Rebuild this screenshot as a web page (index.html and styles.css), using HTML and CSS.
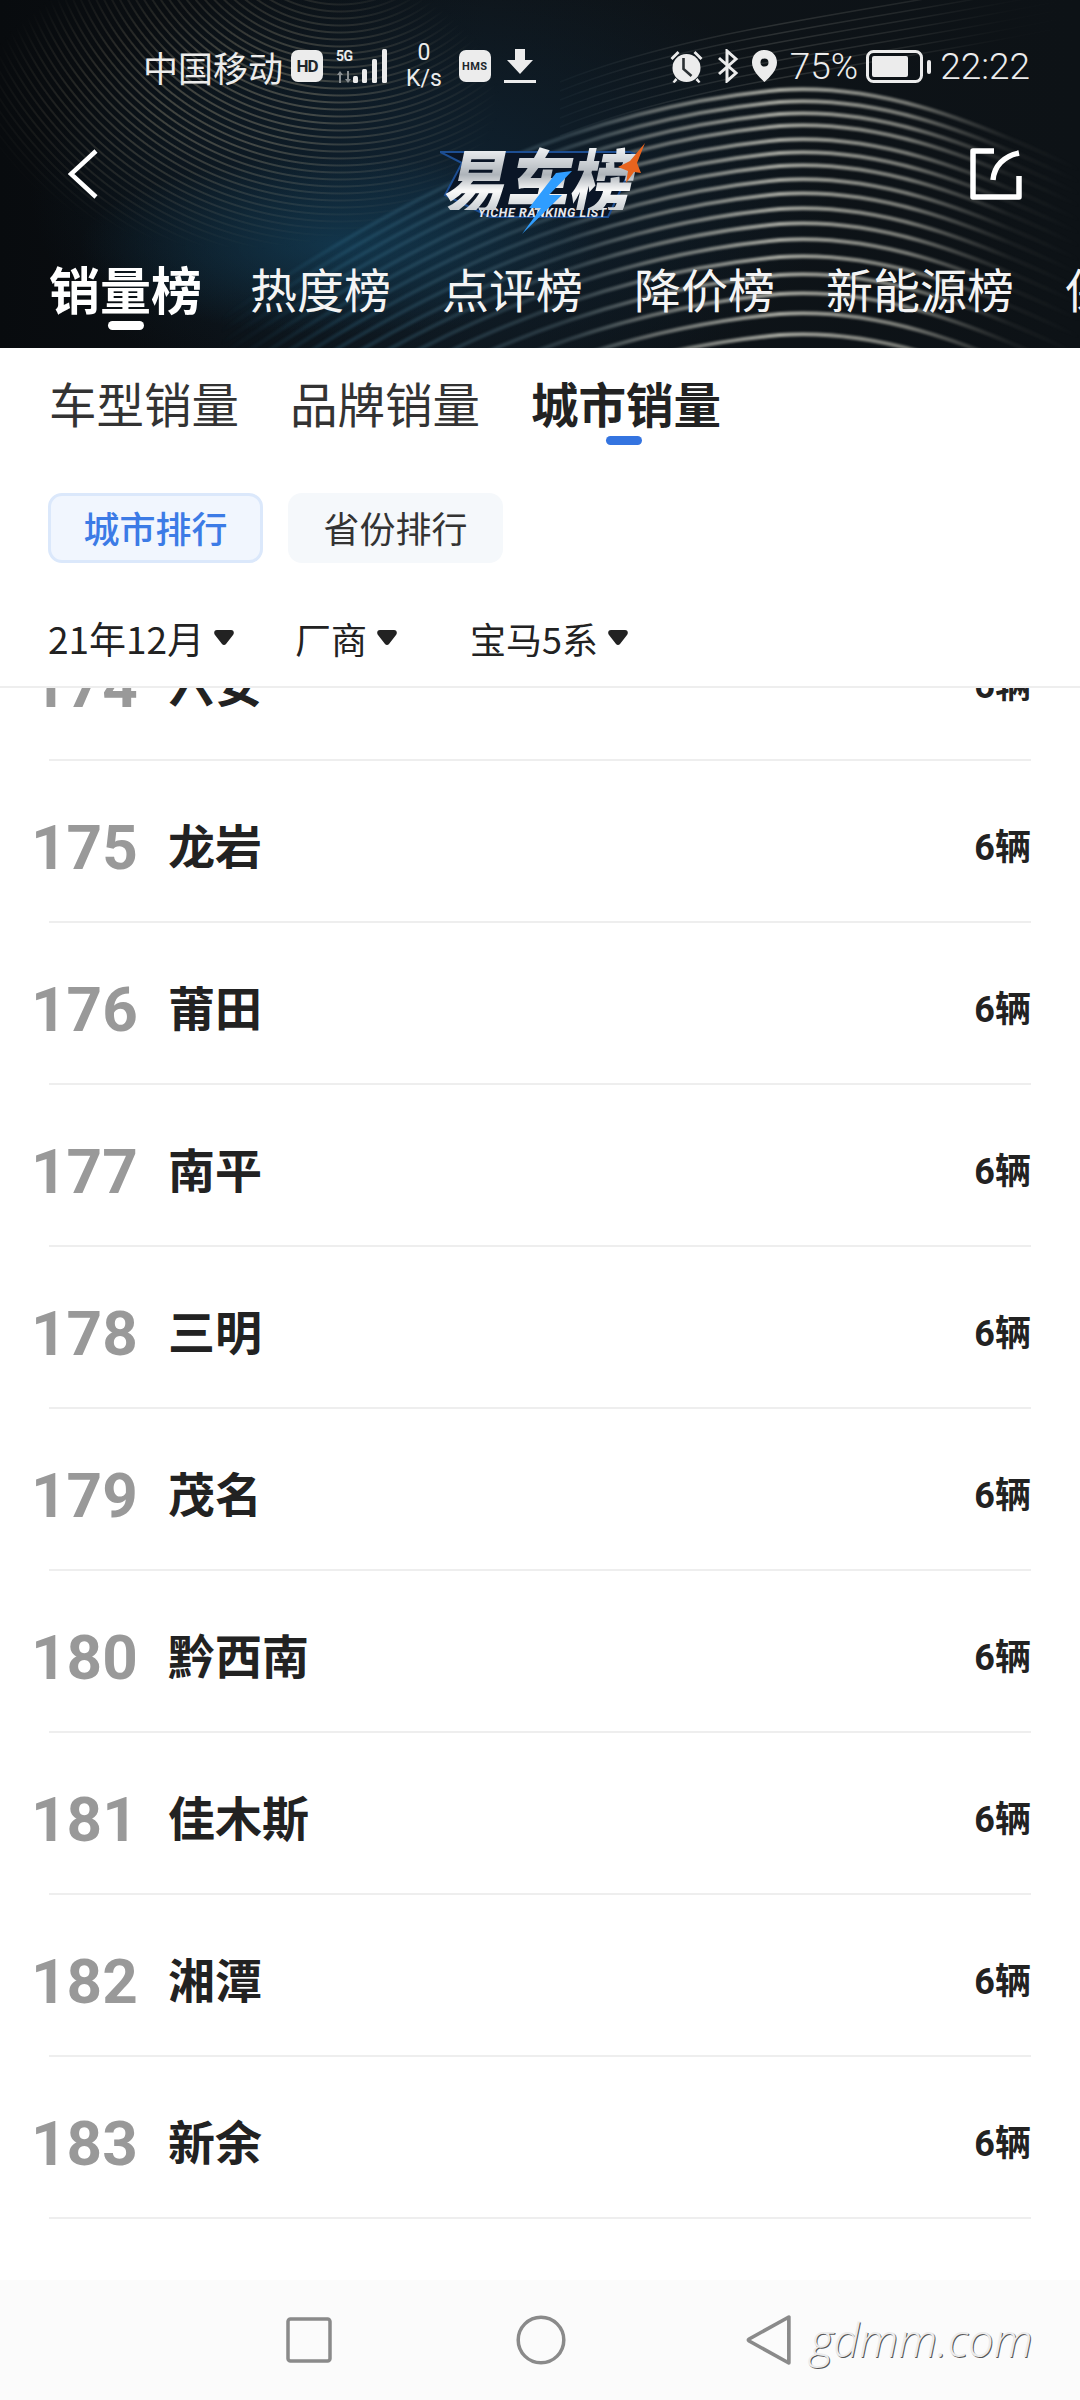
FILE: index.html
```html
<!DOCTYPE html>
<html lang="zh-CN">
<head>
    <meta charset="UTF-8">
    <meta name="viewport" content="width=device-width, initial-scale=1.0">
    <title>易车榜</title>
    <link rel="stylesheet" href="styles.css">
</head>
<body>
    <header class="top">
        <div class="top-rings"></div>
        <svg class="top-waves" viewBox="0 0 1080 348">
            <defs>
                <linearGradient id="wave-ink" gradientUnits="userSpaceOnUse" x1="220" y1="0" x2="1080" y2="0">
                    <stop offset="0" stop-color="#2a6a8a" stop-opacity="0"/>
                    <stop offset="0.15" stop-color="#3b7d9c" stop-opacity="0.25"/>
                    <stop offset="0.4" stop-color="#6f8790" stop-opacity="0.3"/>
                    <stop offset="0.5" stop-color="#a8aca6" stop-opacity="0.55"/>
                    <stop offset="0.65" stop-color="#d6d6ca" stop-opacity="0.75"/>
                    <stop offset="0.8" stop-color="#c8c8bc" stop-opacity="0.55"/>
                    <stop offset="0.92" stop-color="#888880" stop-opacity="0.1"/>
                    <stop offset="1" stop-color="#888880" stop-opacity="0"/>
                </linearGradient>
                <path id="wave" d="M220 320C380 210 560 110 780 90C870 84 960 112 1090 175"/>
                <path id="wave-thin" d="M560 118C700 62 880 48 1080 6"/>
            </defs>
            <g class="waves-thin">
                <use href="#wave-thin"/>
                <use href="#wave-thin" y="-9"/>
                <use href="#wave-thin" y="-18"/>
                <use href="#wave-thin" y="-27"/>
                <use href="#wave-thin" y="-36"/>
                <use href="#wave-thin" y="9"/>
                <use href="#wave-thin" y="18"/>
            </g>
            <g class="waves-main">
                <use href="#wave"/>
                <use href="#wave" y="12"/>
                <use href="#wave" y="24"/>
                <use href="#wave" y="36"/>
                <use href="#wave" y="50"/>
                <use href="#wave" y="63"/>
                <use href="#wave" y="76"/>
                <use href="#wave" y="90"/>
                <use href="#wave" y="104"/>
                <use href="#wave" y="119"/>
                <use href="#wave" y="134"/>
                <use href="#wave" y="150"/>
                <use href="#wave" y="167"/>
                <use href="#wave" y="185"/>
                <use href="#wave" y="204"/>
                <use href="#wave" y="224"/>
                <use href="#wave" y="245"/>
            </g>
        </svg>

        <div class="status">
            <div class="status-group">
                <span class="carrier">中国移动</span>
                <span class="badge badge-hd">HD</span>
                <div class="signal">
                    <div class="signal-net">
                        <span class="signal-5g">5G</span>
                        <svg class="signal-arrows" width="17" height="12" viewBox="0 0 17 12"><path d="M4 0 7 4H5V12H3V4H1ZM12 12 9 8H11V0H13V8H15Z" fill="#8a8f92"/></svg>
                    </div>
                    <svg width="36" height="34" viewBox="0 0 36 34"><g fill="#ececec"><rect x="0" y="27" width="5" height="7" rx="1.5"/><rect x="9" y="20" width="5" height="14" rx="1.5"/><rect x="19" y="10" width="5" height="24" rx="1.5"/><rect x="29" y="0" width="5" height="34" rx="1.5"/></g></svg>
                </div>
                <div class="speed"><span>0</span><span>K/s</span></div>
                <span class="badge badge-hms">HMS</span>
                <svg width="32" height="34" viewBox="0 0 32 34"><path d="M11 0H21V11H29L16 25 3 11H11ZM0 31H32V34H0Z" fill="#ececec"/></svg>
            </div>
            <div class="status-group status-right">
                <svg width="35" height="33" viewBox="0 0 34 33"><g fill="#ececec"><circle cx="17" cy="18" r="14"/><path d="M1 8 8 1 10 3 3 10ZM33 8 26 1 24 3 31 10ZM6 28 3 32 5 33 8 30ZM28 28 31 32 29 33 26 30Z"/></g><path d="M14 8V19L22 26" fill="none" stroke="#2b3033" stroke-width="2.6"/></svg>
                <svg width="22" height="34" viewBox="0 0 22 34"><path d="M2 9 19 24 10 32V2L19 10 2 25" fill="none" stroke="#ececec" stroke-width="3"/></svg>
                <svg width="25" height="32" viewBox="0 0 25 32"><path fill-rule="evenodd" d="M12.5 0C20 0 25 5.500 25 12.500 25 20 18 27 12.500 32 7 27 0 20 0 12.500 0 5.500 5 0 12.500 0ZM12.500 8.500A4 4 0 1 0 12.500 16.500 4 4 0 1 0 12.500 8.500Z" fill="#ececec"/></svg>
                <span class="status-text">75%</span>
                <svg class="battery" width="65" height="33" viewBox="0 0 65 33"><rect x="1.500" y="1.500" width="54" height="30" rx="6" fill="none" stroke="#ececec" stroke-width="3"/><rect x="6" y="6" width="36" height="21" rx="2" fill="#ececec"/><rect x="61" y="10" width="4" height="14" rx="2" fill="#ececec"/></svg>
                <span class="status-text status-time">22:22</span>
            </div>
        </div>

        <div class="titlebar">
            <svg class="back" width="30" height="50" viewBox="0 0 30 50"><path d="M28 2 3 25 28 48" fill="none" stroke="#fff" stroke-width="4.500"/></svg>
            <div class="logo">
                <svg class="logo-plate" width="205" height="92" viewBox="0 0 205 92">
                    <path d="M0 9H190L197 12 168 74H50L5 52 22 20Z" fill="#0a1526" stroke="#1d4e92" stroke-width="2"/>
                </svg>
                <span class="logo-name">易车榜</span>
                <span class="logo-en">YICHE RANKING LIST</span>
                <svg class="logo-bolt" width="205" height="92" viewBox="0 0 205 92">
                    <path d="M116 30 89 65H101L82 91 122 52H109L132 28Z" fill="#2f9dff"/>
                    <path d="M205 0 190 18 178 24 188 28 186 40 194 29 201 30 197 20Z" fill="#e8641e"/>
                </svg>
            </div>
            <svg class="share" width="52" height="52" viewBox="0 0 52 52"><path d="M24 3H3V49H49V28" fill="none" stroke="#fff" stroke-width="5.500" stroke-linejoin="round"/><path d="M23 32C24 18 34 8 49 5" fill="none" stroke="#fff" stroke-width="5.500"/></svg>
        </div>

        <nav class="rank-tabs">
            <div class="rank-tab rank-tab-on">销量榜<i class="rank-mark"></i></div>
            <div class="rank-tab">热度榜</div>
            <div class="rank-tab">点评榜</div>
            <div class="rank-tab">降价榜</div>
            <div class="rank-tab">新能源榜</div>
            <div class="rank-tab">保值榜</div>
        </nav>
    </header>

    <section class="sub">
        <div class="sub-tabs">
            <div class="sub-tab">车型销量</div>
            <div class="sub-tab">品牌销量</div>
            <div class="sub-tab sub-tab-on">城市销量<i class="sub-mark"></i></div>
        </div>
        <div class="chips">
            <div class="chip chip-on">城市排行</div>
            <div class="chip">省份排行</div>
        </div>
        <div class="filters">
            <div class="filter filter-date">21年12月<svg class="caret" width="20" height="15" viewBox="0 0 20 15"><path d="M3 0H17C20 0 20.500 3 19 5L12 14C11 15.300 9 15.300 8 14L1 5C-.5 3 0 0 3 0Z"/></svg></div>
            <div class="filter filter-maker">厂商<svg class="caret" width="20" height="15" viewBox="0 0 20 15"><path d="M3 0H17C20 0 20.500 3 19 5L12 14C11 15.300 9 15.300 8 14L1 5C-.5 3 0 0 3 0Z"/></svg></div>
            <div class="filter">宝马5系<svg class="caret" width="20" height="15" viewBox="0 0 20 15"><path d="M3 0H17C20 0 20.500 3 19 5L12 14C11 15.300 9 15.300 8 14L1 5C-.5 3 0 0 3 0Z"/></svg></div>
        </div>
    </section>

    <main class="list">
        <div class="rows">
            <div class="row"><span class="rank">174</span><span class="city">六安</span><span class="count">6辆</span></div>
            <div class="row"><span class="rank">175</span><span class="city">龙岩</span><span class="count">6辆</span></div>
            <div class="row"><span class="rank">176</span><span class="city">莆田</span><span class="count">6辆</span></div>
            <div class="row"><span class="rank">177</span><span class="city">南平</span><span class="count">6辆</span></div>
            <div class="row"><span class="rank">178</span><span class="city">三明</span><span class="count">6辆</span></div>
            <div class="row"><span class="rank">179</span><span class="city">茂名</span><span class="count">6辆</span></div>
            <div class="row"><span class="rank">180</span><span class="city">黔西南</span><span class="count">6辆</span></div>
            <div class="row"><span class="rank">181</span><span class="city">佳木斯</span><span class="count">6辆</span></div>
            <div class="row"><span class="rank">182</span><span class="city">湘潭</span><span class="count">6辆</span></div>
            <div class="row"><span class="rank">183</span><span class="city">新余</span><span class="count">6辆</span></div>
        </div>
    </main>

    <footer class="navbar">
        <svg width="46" height="46" viewBox="0 0 46 46"><rect x="2" y="2" width="42" height="42" rx="2.500" fill="none" stroke="#8a8a8a" stroke-width="3.500"/></svg>
        <svg width="50" height="50" viewBox="0 0 50 50"><circle cx="25" cy="25" r="22.800" fill="none" stroke="#8a8a8a" stroke-width="3.500"/></svg>
        <svg class="nav-back" width="46" height="50" viewBox="0 0 44 50" preserveAspectRatio="none"><path d="M41 2V48L3 26C2 25.300 2 24.700 3 24Z" fill="none" stroke="#8a8a8a" stroke-width="3.500" stroke-linejoin="round"/></svg>
        <span class="watermark">gdmm.com</span>
    </footer>
</body>
</html>
```

FILE: styles.css
```css
* {
    box-sizing: border-box;
}

body {
    display: flex;
    flex-direction: column;
    width: 1080px;
    height: 2400px;
    margin: 0;
    overflow: hidden;
    background-color: #fff;
    color: #222;
    font-family: "Noto Sans CJK SC", sans-serif;
}

/* top banner */
.top {
    position: relative;
    isolation: isolate;
    flex: none;
    height: 348px;
    overflow: hidden;
    background:
        radial-gradient(ellipse 260px 90px at 340px 245px, rgba(22, 78, 110, 0.5), rgba(16, 50, 74, 0) 100%),
        radial-gradient(ellipse 400px 230px at 430px 190px, #0f2231, rgba(13, 20, 26, 0) 100%),
        linear-gradient(90deg, #080b0e 0%, #0e1419 45%, #0d1216 100%);
    color: #fff;
}

.top-rings {
    position: absolute;
    inset: 0;
    z-index: -1;
    background: repeating-radial-gradient(circle at 340px -120px, rgba(0, 0, 0, 0) 0 4px, rgba(190, 180, 150, 0.3) 5px 6px, rgba(0, 0, 0, 0) 7px);
    -webkit-mask-image: radial-gradient(ellipse 260px 150px at 240px 100px, #000 30%, transparent 100%);
    mask-image: radial-gradient(ellipse 260px 150px at 240px 100px, #000 30%, transparent 100%);
}

.top-waves {
    position: absolute;
    inset: 0;
    z-index: -1;
    width: 1080px;
    height: 348px;
}

.waves-main {
    fill: none;
    stroke: url(#wave-ink);
    stroke-width: 4;
    filter: blur(0.8px);
}

.waves-thin {
    fill: none;
    stroke: url(#wave-ink);
    stroke-width: 1.5;
    opacity: 0.2;
}

/* status bar */
.status {
    display: flex;
    justify-content: space-between;
    align-items: center;
    height: 88px;
    padding: 44px 50px 0 143px;
    color: #ececec;
}

.status-group {
    display: flex;
    align-items: center;
    gap: 13px;
}

.carrier {
    margin-right: -5px;
    font-size: 35px;
    white-space: nowrap;
}

.badge {
    display: flex;
    justify-content: center;
    align-items: center;
    width: 32px;
    height: 32px;
    border-radius: 7px;
    background-color: #ececec;
    color: #20262b;
    font-family: Roboto, sans-serif;
    font-weight: 700;
}

.badge-hd {
    font-size: 17px;
    letter-spacing: -1px;
}

.badge-hms {
    font-size: 11px;
    letter-spacing: 0.5px;
}

.signal {
    display: flex;
    align-items: flex-end;
}

.signal-net {
    display: flex;
    flex-direction: column;
    width: 17px;
    height: 34px;
}

.signal-5g {
    font-family: Roboto, sans-serif;
    font-size: 14px;
    font-weight: 700;
    line-height: 15px;
    letter-spacing: -0.5px;
}

.signal-arrows {
    margin-top: 7px;
}

.speed {
    display: flex;
    flex-direction: column;
    align-items: center;
    margin: 0 4px;
    font-family: Roboto, sans-serif;
    font-size: 23px;
    line-height: 26px;
}

.status-right {
    gap: 13px;
}

.status-text {
    font-family: Roboto, sans-serif;
    font-size: 37px;
    font-weight: 300;
}

.battery {
    margin-left: -5px;
}

.status-time {
    margin-left: -4px;
}

/* title row */
.titlebar {
    display: flex;
    align-items: flex-start;
    height: 172px;
    padding: 55px 58px 0 68px;
}

.back {
    flex: none;
    margin-top: 6px;
}

.logo {
    position: relative;
    isolation: isolate;
    display: flex;
    flex-direction: column;
    align-items: center;
    width: 205px;
    height: 92px;
    margin-left: 342px;
}

.logo-plate {
    position: absolute;
    top: 0;
    left: 0;
    z-index: -1;
}

.logo-bolt {
    position: absolute;
    top: 0;
    left: 0;
}

.logo-name {
    margin-top: 7px;
    background: linear-gradient(180deg, #f4f6f8 0%, #aeb4ba 45%, #fafafa 70%, #c9ced2 100%);
    -webkit-background-clip: text;
    background-clip: text;
    color: transparent;
    font-size: 62px;
    font-weight: 900;
    line-height: 56px;
    letter-spacing: 1px;
    transform: skewX(-12deg) scaleY(1.15);
}

.logo-en {
    margin-top: 1px;
    color: #e6e8ee;
    font-family: Roboto, sans-serif;
    font-size: 12.500px;
    font-style: italic;
    font-weight: 700;
    line-height: 12px;
    letter-spacing: 0.6px;
    white-space: nowrap;
}

.share {
    flex: none;
    margin-top: 5px;
    margin-left: auto;
}

/* main rank tabs */
.rank-tabs {
    display: flex;
    gap: 51px;
    padding-left: 49px;
    color: #f4f4f4;
}

.rank-tab {
    flex: none;
    font-size: 47px;
    line-height: 56px;
    white-space: nowrap;
}

.rank-tab-on {
    display: flex;
    flex-direction: column;
    align-items: center;
    margin-right: -3px;
    font-size: 51px;
    font-weight: 700;
    color: #fff;
}

.rank-mark {
    width: 36px;
    height: 9px;
    margin-top: 5px;
    border-radius: 5px;
    background-color: #fff;
}

/* sub header */
.sub {
    flex: none;
    height: 340px;
    padding: 25px 0 0 48px;
    border-bottom: 2px solid #eee;
    background-color: #fff;
}

.sub-tabs {
    display: flex;
    gap: 51px;
    height: 72px;
    padding-left: 1px;
    color: #333;
}

.sub-tab {
    font-size: 47.500px;
    line-height: 60px;
}

.sub-tab-on {
    display: flex;
    flex-direction: column;
    align-items: center;
    color: #222;
    font-weight: 700;
}

.sub-mark {
    width: 36px;
    height: 9px;
    margin-top: 3px;
    margin-right: 4px;
    border-radius: 5px;
    background-color: #3474e0;
}

.chips {
    display: flex;
    gap: 25px;
    margin-top: 48px;
}

.chip {
    display: flex;
    justify-content: center;
    align-items: center;
    width: 215px;
    height: 70px;
    padding-bottom: 2px;
    border-radius: 14px;
    background-color: #f5f8fb;
    color: #333;
    font-size: 36px;
}

.chip-on {
    border: 3px solid #dbe8fb;
    background-color: #f1f6fe;
    color: #3c7be6;
    font-weight: 500;
}

.filters {
    display: flex;
    margin-top: 50px;
    color: #222;
}

.filter {
    display: flex;
    align-items: center;
    gap: 10px;
    font-size: 36px;
    line-height: 50px;
}

.filter-date {
    width: 247px;
    font-size: 37px;
}

.filter-maker {
    width: 175px;
}

.caret {
    margin-top: -2px;
    fill: #222;
}

/* city list */
.list {
    flex: 1;
    min-height: 0;
    overflow: hidden;
}

.rows {
    margin: -89px 49px 0;
}

.row {
    display: flex;
    align-items: center;
    height: 162px;
    padding-top: 5px;
    border-bottom: 2px solid #eee;
}

.rank {
    width: 137px;
    margin-top: 7px;
    margin-left: -18px;
    color: #999;
    font-family: Roboto, sans-serif;
    font-size: 62px;
    font-weight: 700;
}

.city {
    font-size: 47px;
    font-weight: 700;
}

.count {
    margin-left: auto;
    font-family: Roboto, "Noto Sans CJK SC", sans-serif;
    font-size: 36px;
    font-weight: 700;
}

/* system nav */
.navbar {
    position: relative;
    flex: none;
    display: flex;
    align-items: center;
    height: 120px;
    padding: 0 0 0 286px;
    gap: 184px;
    background-color: #fbfbfb;
}

.nav-back {
    margin-left: -4px;
}

.watermark {
    position: absolute;
    top: 34px;
    left: 810px;
    color: #ececec;
    font-family: "Open Sans", sans-serif;
    font-size: 45.500px;
    font-style: italic;
    font-weight: 300;
    line-height: 50px;
    text-shadow: 1px 1px 0 #555;
}
```
